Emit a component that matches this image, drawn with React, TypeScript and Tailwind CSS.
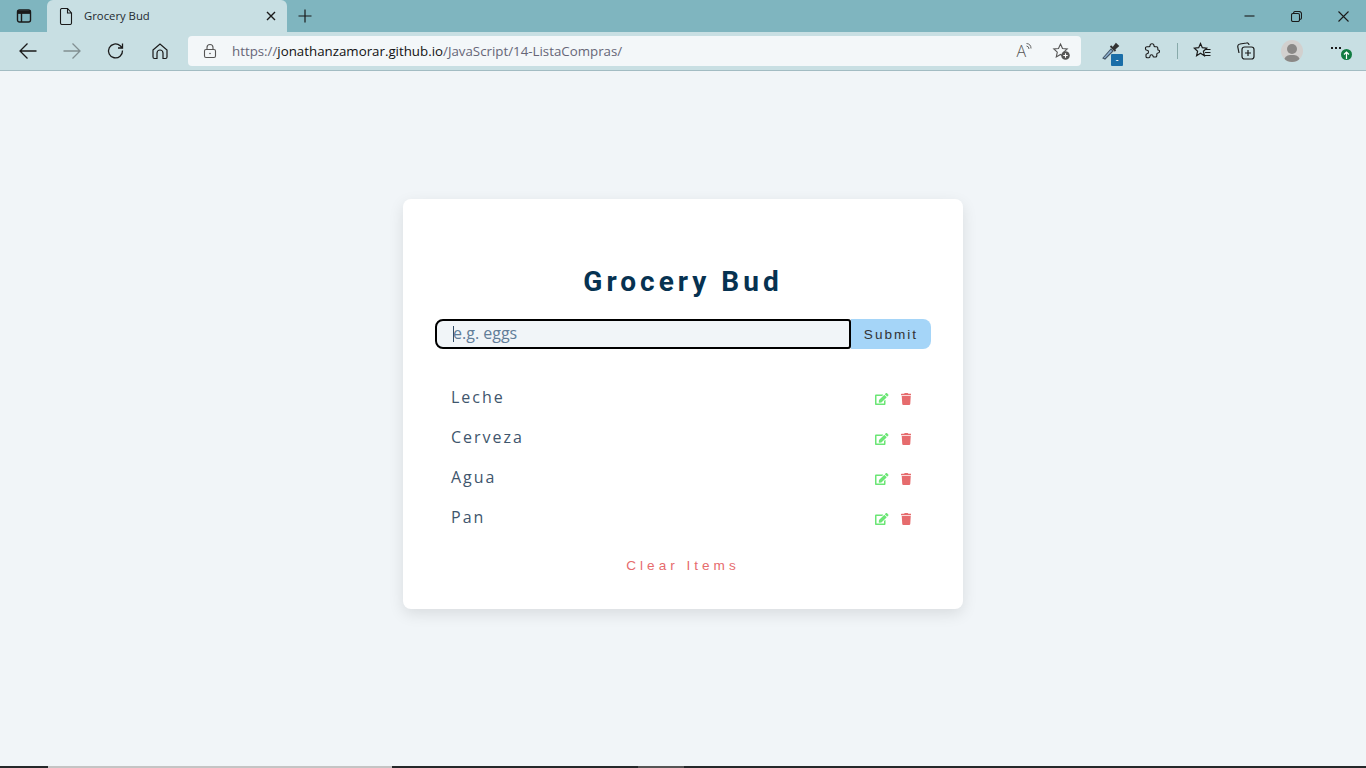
import { FaEdit, FaTrash } from "react-icons/fa";

const S = ({ children, w = 16, h = 16, className = "" }: { children: React.ReactNode; w?: number; h?: number; className?: string }) => (
  <svg width={w} height={h} viewBox={`0 0 ${w} ${h}`} fill="none" stroke="#1a1a1a" strokeWidth="1.1" className={className}>
    {children}
  </svg>
);

function Item({ name }: { name: string }) {
  return (
    <div className="flex h-[40px] items-center justify-between pl-4 pr-[20px]">
      <span className="font-['Open_Sans',sans-serif] text-base leading-[36px] tracking-[2px] text-[#3f566d] -mt-[4px]">{name}</span>
      <div className="flex items-center gap-[12px]">
        <FaEdit className="h-[12px] w-[13.5px] text-[#6be675]" />
        <FaTrash className="h-[12px] w-[10.5px] text-[#e66b6d]" />
      </div>
    </div>
  );
}

export default function App() {
  return (
    <div className="flex h-screen flex-col overflow-hidden bg-[#f1f5f8] font-['Liberation_Sans',sans-serif]">
      <div className="flex h-[32px] shrink-0 items-stretch bg-[#7fb5bf]">
        <div className="flex w-[47px] items-center justify-center">
          <S>
            <rect x="1.5" y="2" width="13" height="12" rx="2" strokeWidth="1.4" />
            <path d="M1.5 5h13M5.5 5v9" strokeWidth="1.4" />
            <path d="M2 3h12v2H2z" fill="#1a1a1a" />
          </S>
        </div>
        <div className="flex w-[240px] items-center rounded-t-[6px] bg-[#c8dfe3] pl-[12px] pr-[10px]">
          <S w={14} h={17}>
            <path d="M1.500 2a1.500 1.500 0 0 1 1.500-1.500h5.500l4 4.500v10a1.500 1.500 0 0 1-1.500 1.500H3A1.500 1.500 0 0 1 1.500 15zM8.500.500V5h4" />
          </S>
          <span className="ml-[11px] flex-1 font-['Open_Sans',sans-serif] text-[11.3px] text-[#1f2a30]">Grocery Bud</span>
          <S w={12} h={12}>
            <path d="M2 2l8 8M10 2l-8 8" strokeWidth="1.4" />
          </S>
        </div>
        <div className="flex w-[35px] items-center justify-center">
          <S>
            <path d="M8 1.500v13M1.500 8h13" strokeWidth="1.2" />
          </S>
        </div>
        <div className="flex-1" />
        <div className="flex items-center pr-[17px]">
          <S w={11} h={16}>
            <path d="M0.500 8h10" />
          </S>
          <S w={11} h={11} className="ml-[36px]">
            <rect x="0.500" y="2.500" width="8" height="8" rx="1.500" />
            <path d="M2.500 2.300A1.800 1.800 0 0 1 4.300.500H8A2.500 2.500 0 0 1 10.500 3v3.700A1.800 1.800 0 0 1 8.700 8.500" />
          </S>
          <S w={11} h={11} className="ml-[36px]">
            <path d="M.500.500l10 10M10.500.500l-10 10" />
          </S>
        </div>
      </div>

      <div className="flex h-[39px] shrink-0 items-center border-b border-[#a3bcc3] bg-[#c8dfe3]">
        <div className="flex w-[188px] items-center pl-[18px]">
          <S w={20} h={20}>
            <path d="M18.500 10H2M9.500 2.500L2 10l7.500 7.500" strokeWidth="1.3" />
          </S>
          <S w={20} h={20} className="ml-[24px] opacity-40">
            <path d="M1.500 10H18M10.500 2.500L18 10l-7.500 7.500" strokeWidth="1.3" />
          </S>
          <S w={20} h={20} className="ml-[24px]">
            <path d="M16.500 9.500a7 7 0 1 1-2.300-4.800l2.300 2.300M16.500 2.500V7H12" strokeWidth="1.3" />
          </S>
          <S w={18} h={18} className="ml-[25px]">
            <path d="M2 8L9 2l7 6v7a1.500 1.500 0 0 1-1.500 1.500H12V11a3 3 0 0 0-6 0v5.500H3.500A1.500 1.500 0 0 1 2 15z" strokeWidth="1.2" />
          </S>
        </div>
        <div className="flex h-[30px] w-[893px] items-center rounded-[4px] bg-[#f3f7f9] pl-[15px] pr-[10px]">
          <S w={14} h={16}>
            <path d="M4 7V4.500a3 3 0 0 1 6 0V7" stroke="#555" />
            <rect x="1.500" y="6.500" width="11" height="8" rx="1.500" stroke="#555" />
            <circle cx="7" cy="10.500" r="0.800" fill="#555" stroke="none" />
          </S>
          <span className="ml-[15px] flex-1 pt-[2px] font-['Open_Sans',sans-serif] text-[13.3px] text-[#667]">
            https://<span className="text-[#111]">jonathanzamorar.github.io</span>/JavaScript/14-ListaCompras/
          </span>
          <span className="flex items-start">
            <span className="font-['Open_Sans',sans-serif] text-[16px] font-light leading-[20px] text-[#555]">A</span>
            <S w={6} h={10} className="mt-[1px]">
              <path d="M.500 1.500a5 5 0 0 1 4.500 5M.500 4a3 3 0 0 1 2.500 3" stroke="#555" strokeWidth="0.900" />
            </S>
          </span>
          <S w={19} h={19} className="ml-[20px]">
            <path d="M8.500 2l2 4.500 4.700.5-3.500 3.200 1 4.800-4.200-2.500L4.300 15l1-4.800L1.800 7l4.700-.5z" stroke="#555" />
            <circle cx="13.500" cy="13.500" r="4.300" fill="#555" stroke="none" />
            <path d="M11.300 13.500h4.400M13.500 11.300v4.400" stroke="#fff" />
          </S>
        </div>
        <div className="relative ml-[19px] flex items-center">
          <S w={20} h={20}>
            <path d="M3 17L11 8l2 2-8 8z" fill="#8fb4d4" stroke="#456" />
            <path d="M10.500 5l5 5M13 7l3-4 2 2-3.500 3" fill="#333" stroke="#333" strokeWidth="1.800" />
          </S>
          <span className="absolute left-[11px] top-[13px] flex h-[12px] w-[12px] items-center justify-center rounded-[1px] bg-[#1a6ea8] text-[8px] font-bold leading-none text-white">-</span>
        </div>
        <S w={16} h={16} className="ml-[24px]">
          <path d="M6 2.800C6 1.500 7 .800 8 .800s2 .700 2 2c0 .700.300 1 1 1h1.500c.700 0 1.300.600 1.300 1.300v1.200c0 .700.400 1 1 1 .400 0 .700.600.700 1.200 0 1-.700 1.500-1.500 1.500-.700 0-1.200.400-1.200 1.200v1.500c0 .800-.600 1.300-1.300 1.300H10c-.700 0-1-.300-1-1 0-.800-.500-1.300-1.500-1.300S6 12.500 6 13.300c0 .700-.400 1.400-1.200 1.400H3.300c-.800 0-1.300-.600-1.300-1.300v-1.700c0-.700.400-1 1-1 1 0 1.500-.700 1.500-1.700S4 7.200 3 7.200c-.800 0-1.500-.500-1.500-1.200V5c0-.700.600-1.200 1.300-1.200H5c.700 0 1-.300 1-1z" strokeWidth="1.100" />
        </S>
        <div className="ml-[17px] h-[16px] w-px bg-[#8aa]" />
        <S w={19} h={19} className="ml-[15px]">
          <path d="M7.500 1.500l1.800 4.200 4.400.5-3.300 3 1 4.500-3.900-2.400-3.900 2.400 1-4.500-3.300-3 4.400-.5z" strokeWidth="1.200" />
          <path d="M12.500 7.500h5M12 10.500h5.500M11.500 13.500h6" strokeWidth="1.200" />
        </S>
        <S w={20} h={20} className="ml-[24px]">
          <rect x="6" y="6" width="12" height="12" rx="2.500" strokeWidth="1.200" />
          <path d="M12 9v6M9 12h6" strokeWidth="1.200" />
          <path d="M3 12L1.800 6A2.500 2.500 0 0 1 4 3l6.500-1A2 2 0 0 1 13 4" strokeWidth="1.200" />
        </S>
        <div className="relative ml-[25px] h-[22px] w-[22px] overflow-hidden rounded-full bg-[#d2d0ce]">
          <div className="absolute left-[6px] top-[3.500px] h-[10px] w-[10px] rounded-full bg-[#8a8886]" />
          <div className="absolute left-[3px] top-[14.500px] h-[12px] w-[16px] rounded-full bg-[#8a8886]" />
        </div>
        <div className="relative ml-[25px] h-[20px] w-[24px]">
          <div className="absolute left-[3px] top-[6px] flex gap-[2px]">
            <i className="h-[2px] w-[2px] bg-[#1a1a1a]" />
            <i className="h-[2px] w-[2px] bg-[#1a1a1a]" />
            <i className="h-[2px] w-[2px] bg-[#1a1a1a]" />
          </div>
          <div className="absolute left-[13px] top-[8px] flex h-[11px] w-[11px] items-center justify-center rounded-full bg-[#107c41]">
            <svg width="7" height="8" viewBox="0 0 7 8" fill="none" stroke="#fff" strokeWidth="1.200">
              <path d="M3.500 8V1M1 3.500L3.500 1 6 3.500" />
            </svg>
          </div>
        </div>
      </div>

      <main className="flex flex-1 flex-col bg-[#f1f5f8]">
        <div className="flex flex-1 justify-center pt-[128px]">
          <section className="h-[410px] w-[560px] rounded-[8px] bg-white p-[32px] shadow-[0_5px_15px_rgba(0,0,0,0.1)]">
            <h3 className="mt-[33px] text-center font-['Roboto',sans-serif] text-[28px] font-bold leading-[35px] tracking-[4px] text-[#063251]">Grocery Bud</h3>
            <form className="mt-[20px] flex h-[30px]">
              <div className="relative h-[30px] w-[416px]">
                <input
                  placeholder="e.g. eggs"
                  className="h-[30px] w-full rounded-l-[8px] rounded-r-[3px] border-2 border-black bg-[#f1f5f8] pb-[2px] pl-[16px] font-['Open_Sans',sans-serif] text-base text-[#222] outline-none placeholder:text-[#617d98]"
                />
                <span className="absolute left-[18px] top-[7px] h-[16px] w-px bg-[#334e68]" />
              </div>
              <button type="button" className="h-[30px] w-[80px] rounded-r-[8px] bg-[#a5d5f8] pt-[1px] text-[13.6px] leading-[30px] tracking-[2px] text-[#333]">Submit</button>
            </form>
            <div className="mt-[30px]">
              {["Leche", "Cerveza", "Agua", "Pan"].map((n) => (
                <Item key={n} name={n} />
              ))}
            </div>
            <button type="button" className="mx-auto mt-[15px] block text-[13.6px] leading-[24px] tracking-[4px] text-[#e66b6d]">Clear Items</button>
          </section>
        </div>
        <div className="flex h-[2px] shrink-0 bg-[#25282a]">
          <div className="ml-[48px] h-full w-[344px] bg-[#c4c4c4]" />
          <div className="ml-[246px] h-full w-[46px] bg-[#555]" />
        </div>
      </main>
    </div>
  );
}
